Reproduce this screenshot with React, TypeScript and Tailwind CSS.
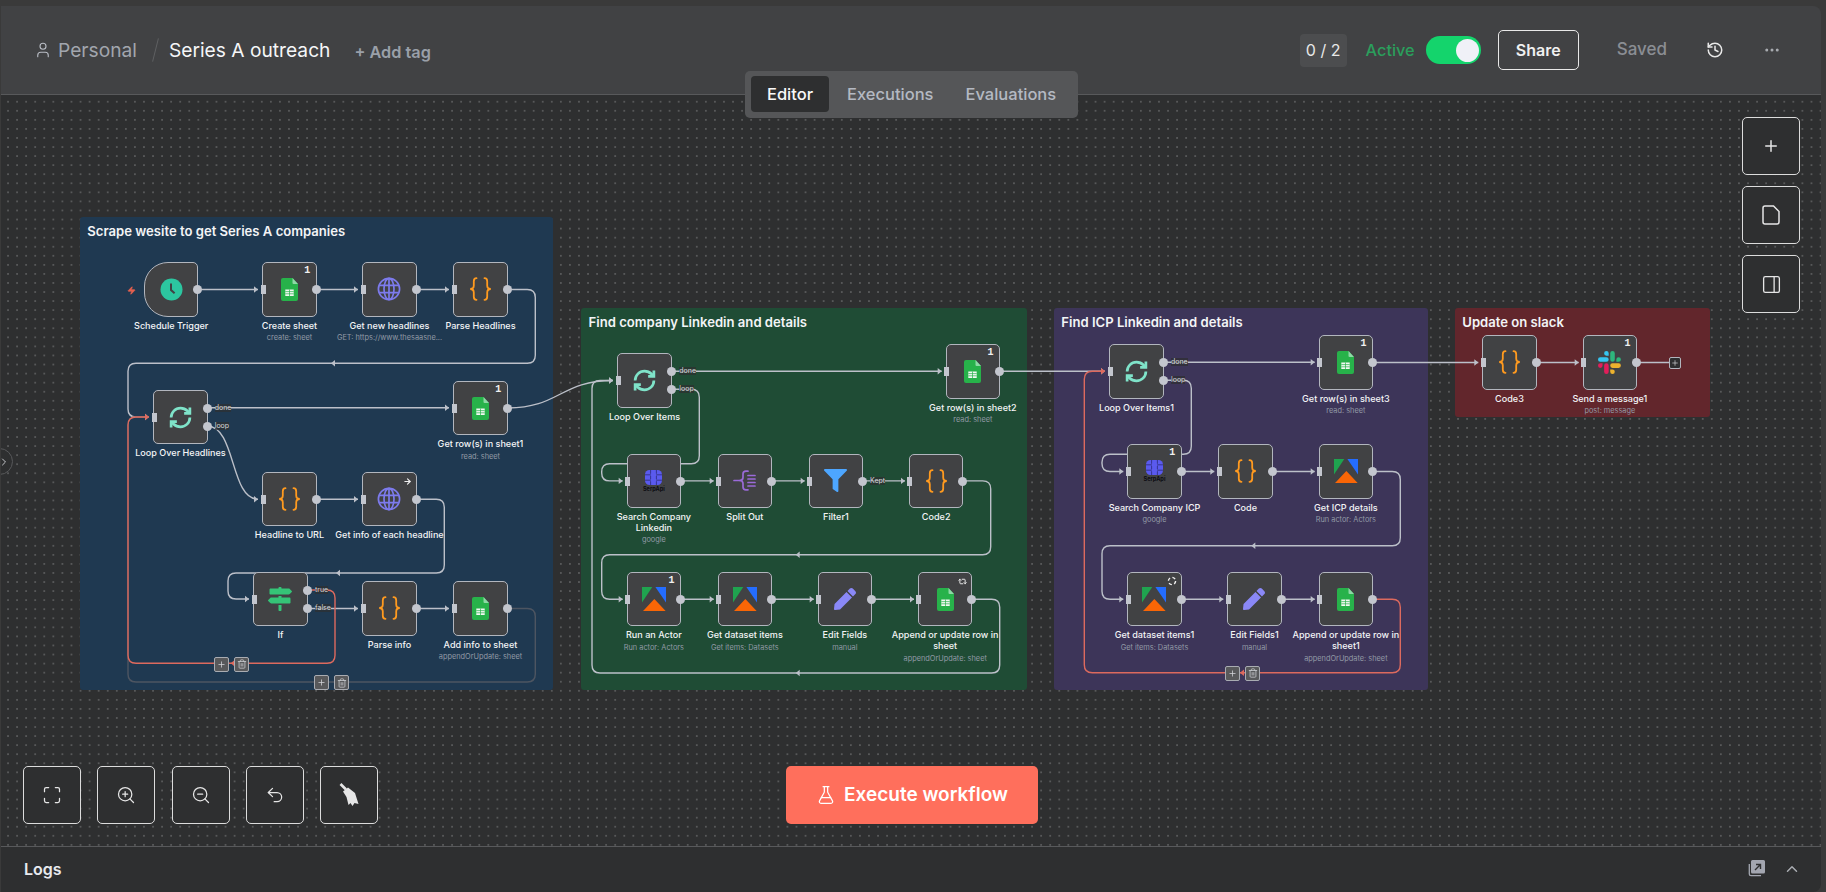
import React from 'react';
import {
  ArrowRight, ChevronRight, ChevronUp, Ellipsis, FlaskConical, History, Maximize, PanelRight, Plus,
  Repeat2, Trash2, Undo2, User, Zap, ZoomIn, ZoomOut,
} from 'lucide-react';
import { FaFilter, FaMapSigns, FaPen } from 'react-icons/fa';

type Pt = [number, number];

const EDGE = '#bcc0c9';
const RED = '#dd6a5e';
const DIM = '#4d5561';

const Sheet = () => (
  <svg width="17" height="23" viewBox="0 0 17 23">
    <path d="M0 2a2 2 0 0 1 2-2h9.5L17 6v15a2 2 0 0 1-2 2H2a2 2 0 0 1-2-2z" fill="#27b24a" />
    <path d="M11.5 0L17 6h-4.5a1 1 0 0 1-1-1z" fill="#8ed8a6" />
    <path d="M4.3 11.5h8.4v6.5H4.3z" fill="#f2f8f3" />
    <path d="M4.3 13.6h8.4M4.3 15.8h8.4M8.5 11.5V18" stroke="#27b24a" strokeWidth="0.7" />
  </svg>
);

const Code = () => (
  <svg width="23" height="24" viewBox="0 0 23 24" fill="none" stroke="#ff9a1f" strokeWidth="1.8" strokeLinecap="round">
    <path d="M7.5 1.2C5.3 1.2 4.8 2.4 4.8 4.2V8.6C4.8 10.6 3.4 12 1.2 12C3.4 12 4.8 13.4 4.8 15.4V19.8C4.8 21.6 5.3 22.8 7.5 22.8" />
    <path d="M15.5 1.2C17.7 1.2 18.2 2.4 18.2 4.2V8.6C18.2 10.6 19.6 12 21.8 12C19.6 12 18.2 13.4 18.2 15.4V19.8C18.2 21.6 17.7 22.8 15.5 22.8" />
  </svg>
);

const Globe = () => (
  <svg width="24" height="24" viewBox="0 0 24 24" fill="none" stroke="#7d7bed" strokeWidth="1.7">
    <circle cx="12" cy="12" r="10.6" />
    <ellipse cx="12" cy="12" rx="5" ry="10.6" />
    <path d="M12 1.4V22.6M2.4 8.4H21.6M2.4 15.6H21.6" />
  </svg>
);

const Clock = () => (
  <svg width="23" height="23" viewBox="0 0 23 23">
    <circle cx="11.5" cy="11.5" r="11" fill="#2cc6a0" />
    <path d="M11 5.5V12L14.6 15.2" fill="none" stroke="#414244" strokeWidth="2" />
  </svg>
);

const Loop = () => (
  <svg width="25" height="25" viewBox="0 0 24 24" fill="none" stroke="#7fe3c9" strokeWidth="2.6">
    <path d="M3 12a9 9 0 0 1 9-9 9.75 9.75 0 0 1 6.74 2.74L21 8" />
    <path d="M21 2.5V8h-5.5" />
    <path d="M21 12a9 9 0 0 1-9 9 9.75 9.75 0 0 1-6.74-2.74L3 16" />
    <path d="M8.5 16H3v5.5" />
  </svg>
);

const Apify = () => (
  <svg width="24" height="24" viewBox="0 0 70 70">
    <path d="M0 0H30L0 45z" fill="#1fa34f" />
    <path d="M39 0H70V45z" fill="#246dff" />
    <path d="M36 35L69 70H3z" fill="#f96606" />
  </svg>
);

const SerpApi = () => (
  <div className="flex flex-col items-center">
    <svg width="17" height="15" viewBox="0 0 17 15">
      <rect width="17" height="15" rx="4.5" fill="#5a5aee" />
      <path d="M0 4.8H17M0 10.2H17M5.6 0V15M11.4 0V15" stroke="#35358f" strokeWidth="1" />
      <path d="M5.6 4.8H11.4M5.6 10.2H11.4" stroke="#5a5aee" strokeWidth="2.4" />
    </svg>
    <span className="mt-px text-[5.6px] leading-[6px] font-bold text-[#0c0c12]">SerpApi</span>
  </div>
);

const SplitOut = () => (
  <svg width="23" height="21" viewBox="0 0 23 21" fill="none" stroke="#9a6ad8" strokeWidth="1.7" strokeLinecap="round">
    <path d="M1 10.5H6.5" />
    <path d="M15 1.2H13C11 1.2 10 2.2 10 4V7.5C10 9.4 8.6 10.5 6.5 10.5C8.6 10.5 10 11.6 10 13.5V17C10 18.8 11 19.8 13 19.8H15" />
    <path d="M15 5.5H22M15 9H22M15 12.5H22M15 16H22" />
  </svg>
);

const Slack = () => (
  <svg width="23" height="23" viewBox="0 0 54 54">
    <path d="M19.712.133a5.381 5.381 0 0 0-5.376 5.387 5.381 5.381 0 0 0 5.376 5.386h5.376V5.52A5.381 5.381 0 0 0 19.712.133m0 14.365H5.376A5.381 5.381 0 0 0 0 19.884a5.381 5.381 0 0 0 5.376 5.387h14.336a5.381 5.381 0 0 0 5.376-5.387 5.381 5.381 0 0 0-5.376-5.386" fill="#36C5F0" />
    <path d="M53.76 19.884a5.381 5.381 0 0 0-5.376-5.386 5.381 5.381 0 0 0-5.376 5.386v5.387h5.376a5.381 5.381 0 0 0 5.376-5.387m-14.336 0V5.52A5.381 5.381 0 0 0 34.048.133a5.381 5.381 0 0 0-5.376 5.387v14.364a5.381 5.381 0 0 0 5.376 5.387 5.381 5.381 0 0 0 5.376-5.387" fill="#2EB67D" />
    <path d="M34.048 54a5.381 5.381 0 0 0 5.376-5.387 5.381 5.381 0 0 0-5.376-5.386h-5.376v5.386A5.381 5.381 0 0 0 34.048 54m0-14.365h14.336a5.381 5.381 0 0 0 5.376-5.386 5.381 5.381 0 0 0-5.376-5.387H34.048a5.381 5.381 0 0 0-5.376 5.387 5.381 5.381 0 0 0 5.376 5.386" fill="#ECB22E" />
    <path d="M0 34.249a5.381 5.381 0 0 0 5.376 5.386 5.381 5.381 0 0 0 5.376-5.386v-5.387H5.376A5.381 5.381 0 0 0 0 34.25m14.336-.001v14.364A5.381 5.381 0 0 0 19.712 54a5.381 5.381 0 0 0 5.376-5.387V34.25a5.381 5.381 0 0 0-5.376-5.387 5.381 5.381 0 0 0-5.376 5.387" fill="#E01E5A" />
  </svg>
);

const Sign = () => <FaMapSigns size={24} color="#35c477" />;
const Funnel = () => <FaFilter size={23} color="#4da6ff" />;
const Pen = () => <FaPen size={22} color="#8a88f7" />;

const Broom = () => (
  <svg width="22" height="24" viewBox="0 0 22 24" fill="#e6e6e6">
    <path d="M2.5 1L8 6.5" fill="none" stroke="#e6e6e6" strokeWidth="2.6" />
    <path d="M5 8.5L10 4.5L17 10L20.5 21L16.5 20L14.5 23L12.5 20L10.5 22L8.5 14z" />
  </svg>
);

const Spinner = () => (
  <svg width="10" height="10" viewBox="0 0 10 10" fill="none" stroke="#f0f0f0" strokeWidth="1.4">
    <circle cx="5" cy="5" r="3.6" strokeDasharray="3.2 2.45" />
  </svg>
);

const stickies = [
  { x: 80, y: 217, w: 473, h: 473, title: 'Scrape wesite to get Series A companies', bg: 'bg-[#1f3951]' },
  { x: 581.3, y: 308, w: 445.4, h: 382, title: 'Find company Linkedin and details', bg: 'bg-[#1f4c35]' },
  { x: 1054, y: 308, w: 374, h: 382, title: 'Find ICP Linkedin and details', bg: 'bg-[#3d3559]' },
  { x: 1455, y: 308, w: 254.7, h: 108.7, title: 'Update on slack', bg: 'bg-[#62262c]' },
];

interface NodeDef {
  x: number;
  y: number;
  label: string;
  sub?: string;
  icon: React.ReactNode;
  badge?: React.ReactNode;
  trigger?: boolean;
  split?: boolean;
}

const nodes: NodeDef[] = [
  { x: 144, y: 262.3, label: 'Schedule Trigger', icon: <Clock />, trigger: true },
  { x: 262.3, y: 262.3, label: 'Create sheet', sub: 'create: sheet', icon: <Sheet />, badge: '1' },
  { x: 362.3, y: 262.3, label: 'Get new headlines', sub: 'GET: https://www.thesaasne...', icon: <Globe /> },
  { x: 453.3, y: 262.3, label: 'Parse Headlines', icon: <Code /> },
  { x: 153.3, y: 390, label: 'Loop Over Headlines', icon: <Loop />, split: true },
  { x: 453.3, y: 381, label: 'Get row(s) in sheet1', sub: 'read: sheet', icon: <Sheet />, badge: '1' },
  { x: 262.3, y: 472, label: 'Headline to URL', icon: <Code /> },
  { x: 362.3, y: 472, label: 'Get info of each headline', icon: <Globe />, badge: <ArrowRight size={9} strokeWidth={3} /> },
  { x: 253.3, y: 572, label: 'If', icon: <Sign />, split: true },
  { x: 362.3, y: 581.3, label: 'Parse info', icon: <Code /> },
  { x: 453.3, y: 581.3, label: 'Add info to sheet', sub: 'appendOrUpdate: sheet', icon: <Sheet /> },

  { x: 617.3, y: 353.3, label: 'Loop Over Items', icon: <Loop />, split: true },
  { x: 945.7, y: 344.3, label: 'Get row(s) in sheet2', sub: 'read: sheet', icon: <Sheet />, badge: '1' },
  { x: 626.7, y: 453.7, label: 'Search Company Linkedin', sub: 'google', icon: <SerpApi /> },
  { x: 717.7, y: 453.7, label: 'Split Out', icon: <SplitOut /> },
  { x: 808.7, y: 453.7, label: 'Filter1', icon: <Funnel /> },
  { x: 909, y: 453.7, label: 'Code2', icon: <Code /> },
  { x: 626.7, y: 572, label: 'Run an Actor', sub: 'Run actor: Actors', icon: <Apify />, badge: '1' },
  { x: 717.7, y: 572, label: 'Get dataset items', sub: 'Get items: Datasets', icon: <Apify /> },
  { x: 817.7, y: 572, label: 'Edit Fields', sub: 'manual', icon: <Pen /> },
  { x: 918, y: 572, label: 'Append or update row in sheet', sub: 'appendOrUpdate: sheet', icon: <Sheet />, badge: <Repeat2 size={9} strokeWidth={2.5} /> },

  { x: 1109.3, y: 344.3, label: 'Loop Over Items1', icon: <Loop />, split: true },
  { x: 1318.7, y: 335.3, label: 'Get row(s) in sheet3', sub: 'read: sheet', icon: <Sheet />, badge: '1' },
  { x: 1127.3, y: 444.3, label: 'Search Company ICP', sub: 'google', icon: <SerpApi />, badge: '1' },
  { x: 1218.3, y: 444.3, label: 'Code', icon: <Code /> },
  { x: 1318.7, y: 444.3, label: 'Get ICP details', sub: 'Run actor: Actors', icon: <Apify /> },
  { x: 1127.3, y: 572, label: 'Get dataset items1', sub: 'Get items: Datasets', icon: <Apify />, badge: <Spinner /> },
  { x: 1227.3, y: 572, label: 'Edit Fields1', sub: 'manual', icon: <Pen /> },
  { x: 1318.7, y: 572, label: 'Append or update row in sheet1', sub: 'appendOrUpdate: sheet', icon: <Sheet /> },

  { x: 1482.3, y: 335.3, label: 'Code3', icon: <Code /> },
  { x: 1582.7, y: 335.3, label: 'Send a message1', sub: 'post: message', icon: <Slack />, badge: '1' },
];

interface EdgeDef {
  pts: Pt[];
  color?: string;
  mid?: Pt;
  noArrow?: boolean;
}

const edges: EdgeDef[] = [
  { pts: [[198, 289.5], [258, 289.5]] },
  { pts: [[316, 289.5], [358, 289.5]] },
  { pts: [[416, 289.5], [449, 289.5]] },
  { pts: [[507, 289.5], [535.3, 289.5], [535.3, 363.3], [128, 363.3], [128, 417], [149, 417]], mid: [333, 363.3] },
  { pts: [[207, 407.7], [449, 407.7]] },
  { pts: [[316, 499.2], [358, 499.2]] },
  { pts: [[416, 499.2], [444.3, 499.2], [444.3, 573], [228, 573], [228, 599], [249, 599]], mid: [338, 573] },
  { pts: [[307, 608.5], [358, 608.5]] },
  { pts: [[416, 608.5], [449, 608.5]] },
  { pts: [[507, 608.5], [535.3, 608.5], [535.3, 682], [128, 682], [128, 417], [149, 417]], color: DIM, noArrow: true },
  { pts: [[307, 590], [335, 590], [335, 663.3], [128, 663.3], [128, 417], [149, 417]], color: RED, mid: [232.7, 663.3] },

  { pts: [[671, 371.3], [941.7, 371.3]] },
  { pts: [[671, 389.3], [699.3, 389.3], [699.3, 463.7], [601.7, 463.7], [601.7, 480.9], [622.7, 480.9]] },
  { pts: [[681, 480.9], [713.7, 480.9]] },
  { pts: [[772, 480.9], [804.7, 480.9]] },
  { pts: [[863, 480.9], [905, 480.9]] },
  { pts: [[963, 480.9], [990.7, 480.9], [990.7, 554.7], [601.7, 554.7], [601.7, 599.2], [622.7, 599.2]], mid: [797.7, 554.7] },
  { pts: [[681, 599.2], [713.7, 599.2]] },
  { pts: [[772, 599.2], [813.7, 599.2]] },
  { pts: [[872, 599.2], [914, 599.2]] },
  { pts: [[972, 599.2], [999.7, 599.2], [999.7, 673], [592, 673], [592, 380.5], [613, 380.5]], mid: [797.7, 673] },

  { pts: [[1000, 371.3], [1105, 371.3]] },
  { pts: [[1163, 362.3], [1314.7, 362.3]] },
  { pts: [[1163, 380.3], [1191.3, 380.3], [1191.3, 454.3], [1102, 454.3], [1102, 471.5], [1123.3, 471.5]] },
  { pts: [[1181, 471.5], [1214.3, 471.5]] },
  { pts: [[1272, 471.5], [1314.7, 471.5]] },
  { pts: [[1373, 471.5], [1400.3, 471.5], [1400.3, 545.7], [1102, 545.7], [1102, 599.2], [1123.3, 599.2]], mid: [1253.3, 545.7] },
  { pts: [[1181, 599.2], [1223.3, 599.2]] },
  { pts: [[1281, 599.2], [1314.7, 599.2]] },
  { pts: [[1373, 599.2], [1400.3, 599.2], [1400.3, 672.7], [1084.3, 672.7], [1084.3, 371.3], [1105, 371.3]], color: RED, mid: [1242, 672.7] },

  { pts: [[1373, 362.5], [1478.3, 362.5]] },
  { pts: [[1536, 362.5], [1578.7, 362.5]] },
  { pts: [[1636, 362.5], [1669, 362.5]], noArrow: true },
];

const edgeLabels: { x: number; y: number; text: string }[] = [
  { x: 214.7, y: 407.7, text: 'done' },
  { x: 214.7, y: 426, text: 'loop' },
  { x: 315, y: 590, text: 'true' },
  { x: 315, y: 608.3, text: 'false' },
  { x: 679.3, y: 371.3, text: 'done' },
  { x: 679.3, y: 389.3, text: 'loop' },
  { x: 870, y: 480.7, text: 'Kept' },
  { x: 1171, y: 362.3, text: 'done' },
  { x: 1171, y: 380.3, text: 'loop' },
];

const edgeTools: { x: number; y: number }[] = [
  { x: 214, y: 656.7 },
  { x: 314.3, y: 675 },
  { x: 1225, y: 665.7 },
];

function roundedPath(pts: Pt[], r = 8) {
  let d = `M${pts[0][0]} ${pts[0][1]}`;
  for (let i = 1; i < pts.length - 1; i++) {
    const [px, py] = pts[i - 1];
    const [cx, cy] = pts[i];
    const [nx, ny] = pts[i + 1];
    const inLen = Math.hypot(cx - px, cy - py);
    const outLen = Math.hypot(nx - cx, ny - cy);
    const a = Math.min(r, inLen / 2);
    const b = Math.min(r, outLen / 2);
    d += `L${cx - ((cx - px) / inLen) * a} ${cy - ((cy - py) / inLen) * a}`;
    d += `Q${cx} ${cy} ${cx + ((nx - cx) / outLen) * b} ${cy + ((ny - cy) / outLen) * b}`;
  }
  const last = pts[pts.length - 1];
  return d + `L${last[0]} ${last[1]}`;
}

const Edges = () => (
  <svg className="absolute top-0 left-0" width="1826" height="892" fill="none">
    {edges.map((e, i) => {
      const color = e.color ?? EDGE;
      const end = e.pts[e.pts.length - 1];
      return (
        <g key={i}>
          <path d={roundedPath(e.pts)} stroke={color} strokeWidth="1.4" />
          {!e.noArrow && <path d={`M${end[0] - 4} ${end[1] - 3.2}L${end[0]} ${end[1]}L${end[0] - 4} ${end[1] + 3.2}z`} fill={color} />}
          {e.mid && <path d={`M${e.mid[0] + 2} ${e.mid[1] - 3.2}L${e.mid[0] - 2} ${e.mid[1]}L${e.mid[0] + 2} ${e.mid[1] + 3.2}z`} fill={color} />}
        </g>
      );
    })}
    <path d="M507 408C560 408 560 380.5 613 380.5" stroke={EDGE} strokeWidth="1.4" />
    <path d="M609 377.3L613 380.5L609 383.7z" fill={EDGE} />
    <path d="M207 426C236 426 230 499.2 258 499.2" stroke={EDGE} strokeWidth="1.4" />
    <path d="M254 496L258 499.2L254 502.4z" fill={EDGE} />
  </svg>
);

const FlowNode = ({ node }: { node: NodeDef }) => (
  <div
    className={`absolute flex h-[54.4px] w-[54.4px] items-center justify-center border border-[#b2b6be] bg-[#414244] ${
      node.trigger ? 'rounded-l-[24px] rounded-r-[5px]' : 'rounded-[5px]'
    }`}
    style={{ left: node.x, top: node.y }}
  >
    {node.icon}
    {node.trigger ? (
      <Zap size={9} className="absolute top-[23px] -left-[18px] fill-[#e4604f] text-[#e4604f]" />
    ) : (
      <div className="absolute top-[22.2px] -left-[2.8px] h-[9px] w-[5px] bg-[#c3c6ce]" />
    )}
    {node.split ? (
      <>
        <div className="absolute top-[13px] -right-[5px] h-[9px] w-[9px] rounded-full bg-[#c3c6ce]" />
        <div className="absolute top-[31.2px] -right-[5px] h-[9px] w-[9px] rounded-full bg-[#c3c6ce]" />
      </>
    ) : (
      <div className="absolute top-[22.2px] -right-[5px] h-[9px] w-[9px] rounded-full bg-[#c3c6ce]" />
    )}
    {node.badge && (
      <div className="absolute top-[3px] right-[3.5px] flex h-[10px] w-[10px] items-center justify-center font-['Liberation_Mono',monospace] text-[10px] leading-[10px] font-bold text-[#f0f0f0]">
        {node.badge}
      </div>
    )}
    <div className="absolute top-full left-1/2 mt-[4px] w-[109px] -translate-x-1/2 text-center">
      <div className="text-[9.07px] leading-[11px] font-medium text-[#f3f4f6]">{node.label}</div>
      {node.sub && <div className="mt-[2.2px] text-[7.37px] leading-[10px] whitespace-nowrap text-[#929aa6]">{node.sub}</div>}
    </div>
  </div>
);

const ToolButton = ({ children }: { children: React.ReactNode }) => (
  <div className="flex h-[58px] w-[58px] items-center justify-center rounded-[5px] border border-[#dcdcdc] bg-[#2e2f30] text-[#e6e6e6]">
    {children}
  </div>
);

export default function App() {
  return (
    <div className="relative h-[892px] w-[1826px] overflow-hidden bg-[#3a3a3a] pt-[6px] pr-[5px] pl-px font-['Inter',sans-serif]">
      <div className="flex h-[886px] flex-col overflow-hidden rounded-r-lg">
        <header className="flex h-[89px] shrink-0 items-center border-b border-[#58595b] bg-[#414244] pr-[40px] pl-[33px]">
          <User size={18} strokeWidth={1.5} className="text-[#b8bcc4]" />
          <span className="ml-[6px] text-[19.2px] text-[#a2a6ae]">Personal</span>
          <span className="mr-[13px] ml-[18px] h-[24px] w-px rotate-[14deg] bg-[#5f6062]" />
          <span className="text-[19.2px] text-[#f5f6f8]">Series A outreach</span>
          <span className="mt-[4px] ml-[24px] text-[16.3px] font-semibold text-[#9aa0a9]">+ Add tag</span>
          <div className="ml-auto flex h-[33px] w-[47px] items-center justify-center rounded-[4px] bg-[#4c4d4f] text-[16px] text-[#e8e8e8]">0 / 2</div>
          <span className="ml-[19px] text-[16.3px] font-medium text-[#2b9e5c]">Active</span>
          <div className="ml-[11px] flex h-[28px] w-[55px] items-center justify-end rounded-full bg-[#14d46c] pr-[2px]">
            <div className="h-[23px] w-[23px] rounded-full bg-[#f0f1f7]" />
          </div>
          <div className="ml-[17px] flex h-[40px] w-[81px] items-center justify-center rounded-[5px] border border-[#e8e8e8] text-[16px] font-semibold text-[#f0f0f0]">Share</div>
          <span className="ml-[38px] text-[17px] font-medium text-[#8b8e94]">Saved</span>
          <History size={18} className="ml-[39px] text-[#e8e8e8]" />
          <Ellipsis size={18} className="ml-[39px] text-[#a8abb0]" />
        </header>

        <main className="relative flex-1 bg-[#2e2f30] bg-[radial-gradient(circle,#575859_0.75px,transparent_0.75px)] bg-[size:9.07px_9.07px] bg-[position:2.5px_2.2px]">
          <div className="absolute -top-[95px] -left-px">
            {stickies.map((s) => (
              <div
                key={s.title}
                className={`absolute rounded-[3px] pt-[5px] pl-[7.3px] text-[13.1px] leading-[18px] font-semibold text-[#f3f4f6] ${s.bg}`}
                style={{ left: s.x, top: s.y, width: s.w, height: s.h }}
              >
                {s.title}
              </div>
            ))}
            <Edges />
            {edgeLabels.map((l, i) => (
              <div
                key={i}
                className="absolute -translate-y-1/2 bg-[#2e2f30]/70 text-[7px] leading-[8px] text-[#d8dade]"
                style={{ left: l.x, top: l.y }}
              >
                {l.text}
              </div>
            ))}
            {nodes.map((n) => (
              <FlowNode key={n.label} node={n} />
            ))}
            {edgeTools.map((t, i) => (
              <div key={i} className="absolute flex gap-[5px]" style={{ left: t.x, top: t.y }}>
                <div className="flex h-[15px] w-[15px] items-center justify-center rounded-[2px] border border-[#a9acb2] bg-[#58595b] text-[#d4d6da]">
                  <Plus size={9} />
                </div>
                <div className="flex h-[15px] w-[15px] items-center justify-center rounded-[2px] border border-[#a9acb2] bg-[#58595b] text-[#c4c6ca]">
                  <Trash2 size={10} />
                </div>
              </div>
            ))}
            <div className="absolute top-[356.7px] left-[1668.7px] flex h-[12px] w-[12px] items-center justify-center rounded-[2px] border border-[#b2b6be] bg-[#2e2f30] text-[#d4d6da]">
              <Plus size={8} />
            </div>
          </div>

          <div className="absolute top-[22px] right-[21px] flex flex-col gap-[11px]">
            <ToolButton><Plus size={18} /></ToolButton>
            <ToolButton>
              <svg width="18" height="20" viewBox="0 0 18 20" fill="none" stroke="#e6e6e6" strokeWidth="1.5">
                <path d="M1 3a2 2 0 0 1 2-2h8.5L17 6.5V17a2 2 0 0 1-2 2H3a2 2 0 0 1-2-2z" />
              </svg>
            </ToolButton>
            <ToolButton><PanelRight size={21} strokeWidth={1.5} /></ToolButton>
          </div>

          <div className="absolute bottom-[22px] left-[22px] flex gap-[16.3px]">
            <ToolButton><Maximize size={20} strokeWidth={1.5} /></ToolButton>
            <ToolButton><ZoomIn size={20} strokeWidth={1.5} /></ToolButton>
            <ToolButton><ZoomOut size={20} strokeWidth={1.5} /></ToolButton>
            <ToolButton><Undo2 size={20} strokeWidth={1.5} /></ToolButton>
            <ToolButton><Broom /></ToolButton>
          </div>

          <div className="absolute bottom-[22px] left-[785px] flex h-[58px] w-[252px] items-center justify-center gap-[8px] rounded-[5px] bg-[#ff6f5c] text-[19px] font-semibold text-white">
            <FlaskConical size={20} strokeWidth={1.5} />
            Execute workflow
          </div>

          <div className="absolute top-[353px] -left-[15px] flex h-[27px] w-[27px] items-center justify-end rounded-full border border-[#58595b] bg-[#2e2f30] pr-[2px] text-[#c4c6ca]">
            <ChevronRight size={12} />
          </div>
        </main>

        <footer className="flex h-[46px] shrink-0 items-center border-t border-[#58595b] bg-[#2e2f30] pr-[20px] pb-[2px] pl-[23px]">
          <span className="text-[16px] font-semibold text-[#e8eaee]">Logs</span>
          <svg className="ml-auto" width="17" height="17" viewBox="0 0 17 17">
            <path d="M3 1.5a1.5 1.5 0 0 1 1.5-1.5H15.5A1.5 1.5 0 0 1 17 1.5v10.5a1.5 1.5 0 0 1-1.5 1.5H4.5A1.5 1.5 0 0 1 3 12z" fill="#a3a6b0" />
            <path d="M1.3 4v10a1.7 1.7 0 0 0 1.7 1.7h10" fill="none" stroke="#a3a6b0" strokeWidth="1.3" />
            <path d="M7 10l5-5M8 4.5h4.5V9" fill="none" stroke="#2e2f30" strokeWidth="1.4" />
          </svg>
          <ChevronUp size={18} className="ml-[18px] text-[#a8abb0]" />
        </footer>
      </div>

      <div className="absolute top-[71px] left-[745px] flex h-[47px] w-[333px] items-center rounded-[5px] bg-[#555658] pb-[1px] pl-[6px] text-[16.5px] font-medium text-[#b4b9c2]">
        <div className="flex h-[36px] w-[78px] items-center justify-center rounded-[4px] bg-[#2e2f30] text-[#f8f8f8]">Editor</div>
        <span className="ml-[18px]">Executions</span>
        <span className="ml-[32px]">Evaluations</span>
      </div>
    </div>
  );
}
